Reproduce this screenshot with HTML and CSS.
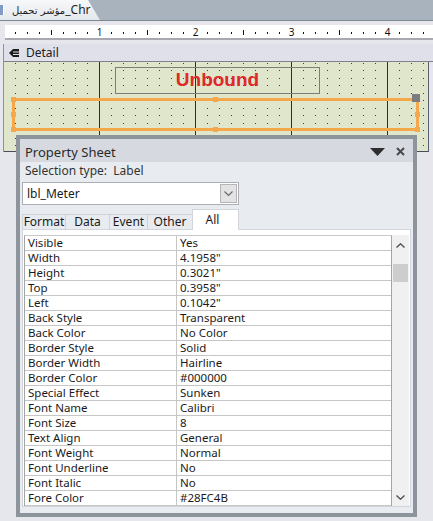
FILE: index.html
```html
<!DOCTYPE html>
<html>
<head>
<meta charset="utf-8">
<link rel="stylesheet" href="styles.css">
</head>
<body>
<div class="app">
  <div class="tabbar">
    <div class="doctab">
      <div class="tabicon"></div>
      <span class="doctab-text"><span class="ar">مؤشر تحميل</span>_Chr</span>
    </div>
  </div>

  <div class="rulerzone">
    <div class="ruler">
      <svg class="ruler-svg" width="428" height="13" viewBox="0 0 428 13">
        <defs>
          <pattern id="rt" x="-2" y="0" width="96" height="13" patternUnits="userSpaceOnUse">
            <rect x="12" y="7" width="1" height="2" fill="#111"/>
            <rect x="24" y="7" width="1" height="2" fill="#111"/>
            <rect x="36" y="7" width="1" height="2" fill="#111"/>
            <rect x="48" y="5" width="1" height="5" fill="#111"/>
            <rect x="60" y="7" width="1" height="2" fill="#111"/>
            <rect x="72" y="7" width="1" height="2" fill="#111"/>
            <rect x="84" y="7" width="1" height="2" fill="#111"/>
          </pattern>
        </defs>
        <rect width="428" height="13" fill="url(#rt)"/>
        <g class="ruler-num" text-anchor="middle">
          <rect x="90" y="0" width="9" height="13" fill="#fff"/>
          <rect x="186" y="0" width="9" height="13" fill="#fff"/>
          <rect x="282" y="0" width="9" height="13" fill="#fff"/>
          <rect x="378" y="0" width="9" height="13" fill="#fff"/>
          <text x="94.5" y="11">1</text>
          <text x="190.5" y="11">2</text>
          <text x="286.5" y="11">3</text>
          <text x="382.5" y="11">4</text>
        </g>
      </svg>
    </div>
  </div>

  <div class="designer">
    <div class="section-head">
      <svg class="section-icon" width="10" height="10" viewBox="0 0 10 10">
        <path d="M0 5 L4 1 L10 1 L10 9 L4 9 Z" fill="#1a1a1a"/>
        <rect x="4" y="3.5" width="6" height="1" fill="#e0e0ea"/>
        <rect x="4" y="6" width="6" height="1" fill="#e0e0ea"/>
      </svg>
      <span>Detail</span>
    </div>
    <div class="canvas">
      <svg class="grid" width="424" height="89" viewBox="0 0 424 89">
        <defs>
          <pattern id="gd" x="-1" y="1" width="12" height="15" patternUnits="userSpaceOnUse">
            <rect x="0" y="0" width="1" height="1" fill="#3c3c3c"/>
            <rect x="0" y="7" width="1" height="1" fill="#3c3c3c"/>
          </pattern>
        </defs>
        <rect width="424" height="89" fill="url(#gd)"/>
        <g fill="#1f2a6b">
          <rect x="95" y="0" width="1" height="89"/>
          <rect x="191" y="0" width="1" height="89"/>
          <rect x="287" y="0" width="1" height="89"/>
          <rect x="383" y="0" width="1" height="89"/>
        </g>
      </svg>
      <div class="ctl-unbound">Unbound</div>
      <div class="sel">
        <div class="sel-frame"></div>
        <div class="h h-tl"></div>
        <div class="h h-tm"></div>
        <div class="h h-ml"></div>
        <div class="h h-bl"></div>
        <div class="h h-bm"></div>
        <div class="h h-mr"></div>
        <div class="h h-br"></div>
        <div class="h-move"></div>
      </div>
    </div>
  </div>

  <div class="propsheet">
    <div class="ps-title">
      <span>Property Sheet</span>
      <div class="ps-tools">
        <svg width="15" height="8" viewBox="0 0 15 8"><path d="M0 0 L15 0 L7.5 8 Z" fill="#2e2e2e"/></svg>
        <svg width="9" height="9" viewBox="0 0 9 9"><path d="M1 1 L8 8 M8 1 L1 8" stroke="#4a4a4a" stroke-width="2" fill="none"/></svg>
      </div>
    </div>
    <div class="ps-seltype">Selection type:&nbsp; Label</div>
    <div class="ps-combo">
      <span class="ps-combo-text">lbl_Meter</span>
      <div class="ps-combo-btn">
        <svg width="9" height="6" viewBox="0 0 9 6"><path d="M0.5 0.5 L4.5 4.5 L8.5 0.5" stroke="#6a6a6a" stroke-width="1.2" fill="none"/></svg>
      </div>
    </div>
    <div class="ps-tabs">
      <div class="ps-tab w-format">Format</div>
      <div class="ps-tab w-data">Data</div>
      <div class="ps-tab w-event">Event</div>
      <div class="ps-tab w-other">Other</div>
      <div class="ps-tab w-all active">All</div>
    </div>
    <div class="ps-page">
      <div class="ps-grid">
        <div class="row"><div class="k">Visible</div><div class="v">Yes</div></div>
        <div class="row"><div class="k">Width</div><div class="v">4.1958"</div></div>
        <div class="row"><div class="k">Height</div><div class="v">0.3021"</div></div>
        <div class="row"><div class="k">Top</div><div class="v">0.3958"</div></div>
        <div class="row"><div class="k">Left</div><div class="v">0.1042"</div></div>
        <div class="row"><div class="k">Back Style</div><div class="v">Transparent</div></div>
        <div class="row"><div class="k">Back Color</div><div class="v">No Color</div></div>
        <div class="row"><div class="k">Border Style</div><div class="v">Solid</div></div>
        <div class="row"><div class="k">Border Width</div><div class="v">Hairline</div></div>
        <div class="row"><div class="k">Border Color</div><div class="v">#000000</div></div>
        <div class="row"><div class="k">Special Effect</div><div class="v">Sunken</div></div>
        <div class="row"><div class="k">Font Name</div><div class="v">Calibri</div></div>
        <div class="row"><div class="k">Font Size</div><div class="v">8</div></div>
        <div class="row"><div class="k">Text Align</div><div class="v">General</div></div>
        <div class="row"><div class="k">Font Weight</div><div class="v">Normal</div></div>
        <div class="row"><div class="k">Font Underline</div><div class="v">No</div></div>
        <div class="row"><div class="k">Font Italic</div><div class="v">No</div></div>
        <div class="row"><div class="k">Fore Color</div><div class="v">#28FC4B</div></div>
        <div class="row partial"><div class="k"></div><div class="v"></div></div>
      </div>
      <div class="ps-scroll">
        <svg class="sc-up" width="9" height="5" viewBox="0 0 9 5"><path d="M0.5 4.5 L4.5 0.8 L8.5 4.5" stroke="#505050" stroke-width="1.4" fill="none"/></svg>
        <div class="sc-thumb"></div>
        <div class="sc-track"></div>
        <svg class="sc-down" width="9" height="5" viewBox="0 0 9 5"><path d="M0.5 0.5 L4.5 4.2 L8.5 0.5" stroke="#505050" stroke-width="1.4" fill="none"/></svg>
      </div>
    </div>
  </div>
</div>
</body>
</html>
```

FILE: styles.css
```css
html, body {
  margin: 0;
  padding: 0;
}
body {
  background: #e6e7ed;
  font-family: "Noto Sans", "DejaVu Sans", sans-serif;
  font-size: 12px;
  color: #1a1a1a;
}
.app {
  position: relative;
  width: 433px;
  height: 521px;
  overflow: hidden;
  background: #e6e7ed;
}

/* document tab bar */
.tabbar {
  height: 20px;
  background: #a9b3be;
  border-bottom: 1px solid #7d8792;
  display: flex;
}
.doctab {
  width: 100px;
  height: 20px;
  background: linear-gradient(#f7f8fa, #e4e7eb);
  clip-path: polygon(0 0, 88px 0, 100px 100%, 0 100%);
  display: flex;
  align-items: center;
}
.tabicon {
  width: 3px;
  height: 10px;
  background: #7f9cc4;
  border-right: 1px solid #ffffff;
  margin-right: 8px;
}
.doctab-text {
  font-size: 12px;
  color: #1c1c1c;
  white-space: nowrap;
  line-height: 16px;
}
.ar {
  font-family: "DejaVu Sans", sans-serif;
  font-size: 10px;
}

/* ruler */
.rulerzone {
  height: 23px;
  box-sizing: border-box;
  padding-top: 4px;
  background: #e6e6ec;
}
.ruler {
  margin-left: 5px;
  height: 13px;
  background: #ffffff;
  border-bottom: 2px solid #a7a8b0;
}
.ruler-svg {
  display: block;
}
.ruler-num text {
  font-family: "Noto Sans", "DejaVu Sans", sans-serif;
  font-size: 10px;
  fill: #111;
}

/* design surface */
.designer {
  margin-left: 3px;
  border-left: 1px solid #8f909a;
}
.section-head {
  height: 17px;
  background: #e0e0ea;
  border-bottom: 1px solid #80808c;
  display: flex;
  align-items: center;
  gap: 7px;
  padding-left: 5px;
  font-size: 12px;
  color: #202020;
}
.section-icon {
  display: block;
}
.canvas {
  position: relative;
  width: 424px;
  height: 89px;
  background: #dfe6cc;
  border-right: 1px solid #5b6070;
  border-bottom: 1px solid #4a4e5a;
}
.grid {
  display: block;
}
.ctl-unbound {
  position: absolute;
  left: 111px;
  top: 5px;
  width: 203px;
  height: 25px;
  border: 1px solid #7c7c7c;
  color: #de2a2a;
  font-family: "Liberation Sans", Arial, sans-serif;
  font-weight: bold;
  font-size: 19px;
  line-height: 24px;
  text-align: center;
}
.sel {
  position: absolute;
  left: 8px;
  top: 36px;
  width: 407px;
  height: 33px;
}
.sel-frame {
  position: absolute;
  inset: 0;
  border: 3px solid #f4a84b;
}
.h {
  position: absolute;
  width: 5px;
  height: 5px;
  background: #f4a84b;
}
.h-tl { left: -1px; top: -1px; }
.h-tm { left: 201px; top: -1px; }
.h-ml { left: -1px; top: 14px; }
.h-bl { left: -1px; top: 29px; }
.h-bm { left: 201px; top: 29px; }
.h-mr { left: 403px; top: 14px; }
.h-br { left: 403px; top: 29px; }
.h-move {
  position: absolute;
  left: 400px;
  top: -4px;
  width: 8px;
  height: 8px;
  background: #7d7d80;
}

/* property sheet */
.propsheet {
  position: absolute;
  left: 16px;
  top: 135px;
  width: 401px;
  height: 382px;
  box-sizing: border-box;
  border: 4px solid #8e949c;
  background: #e8ebf0;
  display: flex;
  flex-direction: column;
}
.ps-title {
  height: 23px;
  box-sizing: border-box;
  padding: 2px 8px 0 5px;
  background: #d6dae0;
  display: flex;
  align-items: center;
  justify-content: space-between;
  font-size: 13px;
  color: #2a2a2a;
}
.ps-tools {
  display: flex;
  align-items: center;
  gap: 11px;
}
.ps-tools svg {
  display: block;
}
.ps-seltype {
  height: 20px;
  box-sizing: border-box;
  padding: 1px 0 0 5px;
  line-height: 16px;
  color: #333;
  font-size: 12px;
}
.ps-combo {
  margin-left: 2px;
  width: 217px;
  height: 23px;
  box-sizing: border-box;
  background: #ffffff;
  border: 1px solid #abaeb4;
  display: flex;
  align-items: center;
  justify-content: space-between;
  padding: 0 1px 0 4px;
}
.ps-combo-text {
  font-size: 12px;
  color: #1a1a1a;
}
.ps-combo-btn {
  width: 17px;
  height: 19px;
  box-sizing: border-box;
  background: #e3e3e3;
  border: 1px solid #b5b5b5;
  display: flex;
  align-items: center;
  justify-content: center;
}
.ps-combo-btn svg { display: block; }
.ps-tabs {
  margin-top: 4px;
  margin-left: 2px;
  height: 20px;
  display: flex;
  align-items: flex-end;
  position: relative;
  z-index: 1;
}
.ps-tab {
  height: 15px;
  box-sizing: border-box;
  border: 1px solid #cfd3d9;
  border-bottom: none;
  margin-right: -1px;
  text-align: center;
  font-size: 12px;
  line-height: 14px;
  color: #1a1a1a;
}
.w-format { width: 44px; }
.w-data { width: 45px; }
.w-event { width: 39px; }
.w-other { width: 46px; }
.w-all { width: 47px; }
.ps-tab.active {
  height: 21px;
  background: #ffffff;
  border-color: #d2d6dc;
  line-height: 20px;
  margin-bottom: -1px;
  padding-right: 6px;
}
.ps-page {
  margin-left: 2px;
  width: 389px;
  height: 278px;
  box-sizing: border-box;
  background: #ffffff;
  border: 1px solid #d2d6dc;
  padding: 5px 1px 0 1px;
  display: flex;
}
.ps-grid {
  flex: 1;
  border-left: 1px solid #a5a5a5;
  border-top: 1px solid #c9c9c9;
  border-right: 1px solid #a5a5a5;
  overflow: hidden;
}
.row {
  display: grid;
  grid-template-columns: 152px 1fr;
  height: 15px;
  box-sizing: border-box;
  border-bottom: 1px solid #c6c6c6;
}
.row.partial {
  border-bottom: none;
}
.k, .v {
  padding-left: 3px;
  font-size: 11.5px;
  line-height: 14px;
  white-space: nowrap;
  color: #1a1a1a;
}
.k {
  border-right: 1px solid #c6c6c6;
}
.ps-scroll {
  width: 17px;
  background: #f0f0f0;
  display: flex;
  flex-direction: column;
  align-items: center;
}
.sc-up {
  display: block;
  margin-top: 8px;
}
.sc-thumb {
  margin-top: 16px;
  width: 15px;
  height: 18px;
  background: #cdcdcd;
}
.sc-track {
  flex: 1;
}
.sc-down {
  display: block;
  margin-bottom: 6px;
}
```
